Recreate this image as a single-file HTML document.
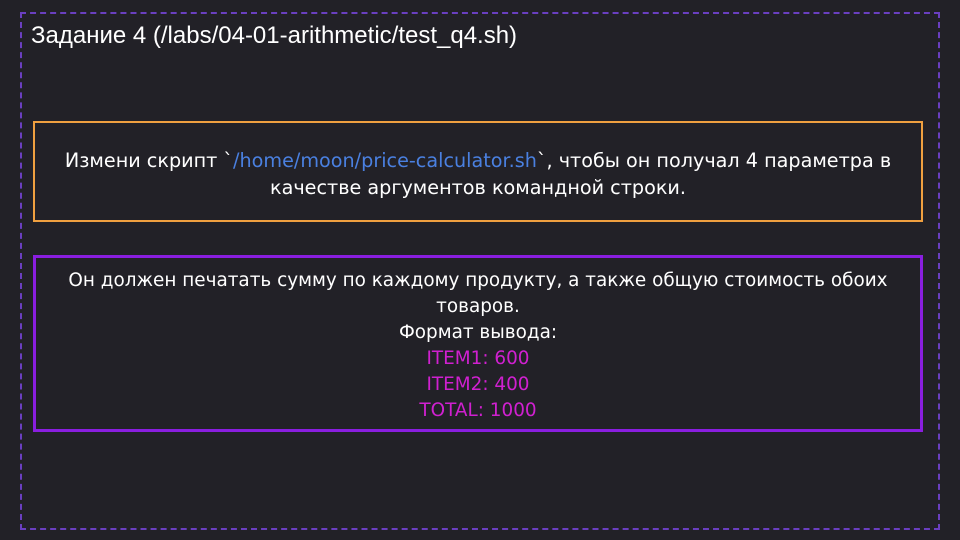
<!DOCTYPE html>
<html><head><meta charset="utf-8"><style>
html,body{margin:0;padding:0;}
body{width:960px;height:540px;background:#222127;position:relative;overflow:hidden;font-family:"Liberation Sans",sans-serif;color:#fff;}
.dash{position:absolute;left:20px;top:12px;width:916px;height:514px;border:2px dashed #6a3fc0;}
.title{position:absolute;left:31px;top:22px;font-size:24px;color:#fff;}
.box1,.box2{font-family:"DejaVu Sans",sans-serif;}
.box1{position:absolute;left:33px;top:121px;border:2px solid #f0a040;display:flex;align-items:center;justify-content:center;text-align:center;font-size:19.2px;line-height:27px;padding-top:4px;box-sizing:border-box;height:101px;width:890px;}
.box2{position:absolute;left:33px;top:255px;width:884px;text-align:center;font-size:18.4px;line-height:26px;padding-top:10px;height:161px;border:3px solid #8a1ee0;}
.blue{color:#4a80e0;}
.mag{color:#d020d0;}
</style></head><body>
<div class="dash"></div>
<div class="title">Задание 4 (/labs/04-01-arithmetic/test_q4.sh)</div>
<div class="box1"><div>Измени скрипт `<span class="blue">/home/moon/price-calculator.sh</span>`, чтобы он получал 4 параметра в<br>качестве аргументов командной строки.</div></div>
<div class="box2">Он должен печатать сумму по каждому продукту, а также общую стоимость обоих<br>товаров.<br>Формат вывода:<br><span class="mag">ITEM1: 600</span><br><span class="mag">ITEM2: 400</span><br><span class="mag">TOTAL: 1000</span></div>
</body></html>
